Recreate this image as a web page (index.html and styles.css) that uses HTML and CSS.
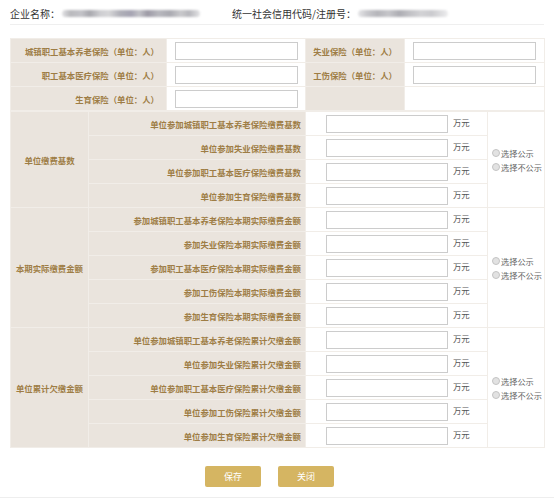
FILE: index.html
```html
<!DOCTYPE html>
<html lang="zh">
<head>
<meta charset="utf-8">
<link rel="stylesheet" href="styles.css">
</head>
<body>
<div class="page">
  <div class="header">
    <div class="hitem first">企业名称：<span class="blur b1"></span></div>
    <div class="hitem">统一社会信用代码/注册号：<span class="blur b2"></span></div>
  </div>

  <table class="grid top">
    <colgroup><col class="c1"><col class="c2"><col class="c3"><col class="c4"></colgroup>
    <tr>
      <td class="lbl">城镇职工基本养老保险（单位：人）</td>
      <td class="val"><input class="inp"></td>
      <td class="lbl">失业保险（单位：人）</td>
      <td class="val"><input class="inp"></td>
    </tr>
    <tr>
      <td class="lbl">职工基本医疗保险（单位：人）</td>
      <td class="val"><input class="inp"></td>
      <td class="lbl">工伤保险（单位：人）</td>
      <td class="val"><input class="inp"></td>
    </tr>
    <tr>
      <td class="lbl">生育保险（单位：人）</td>
      <td class="val"><input class="inp"></td>
      <td class="lbl"></td>
      <td class="val"></td>
    </tr>
  </table>

  <table class="grid main">
    <colgroup><col class="m1"><col class="m2"><col class="m3"><col class="m4"></colgroup>
    <tr>
      <td class="grp" rowspan="4">单位缴费基数</td>
      <td class="lbl item">单位参加城镇职工基本养老保险缴费基数</td>
      <td class="amt"><input class="inp2"><span class="unit">万元</span></td>
      <td class="pub" rowspan="4"><label class="radio"><span class="dot"></span>选择公示</label><label class="radio"><span class="dot"></span>选择不公示</label></td>
    </tr>
    <tr><td class="lbl item">单位参加失业保险缴费基数</td><td class="amt"><input class="inp2"><span class="unit">万元</span></td></tr>
    <tr><td class="lbl item">单位参加职工基本医疗保险缴费基数</td><td class="amt"><input class="inp2"><span class="unit">万元</span></td></tr>
    <tr><td class="lbl item">单位参加生育保险缴费基数</td><td class="amt"><input class="inp2"><span class="unit">万元</span></td></tr>

    <tr>
      <td class="grp" rowspan="5">本期实际缴费金额</td>
      <td class="lbl item">参加城镇职工基本养老保险本期实际缴费金额</td>
      <td class="amt"><input class="inp2"><span class="unit">万元</span></td>
      <td class="pub" rowspan="5"><label class="radio"><span class="dot"></span>选择公示</label><label class="radio"><span class="dot"></span>选择不公示</label></td>
    </tr>
    <tr><td class="lbl item">参加失业保险本期实际缴费金额</td><td class="amt"><input class="inp2"><span class="unit">万元</span></td></tr>
    <tr><td class="lbl item">参加职工基本医疗保险本期实际缴费金额</td><td class="amt"><input class="inp2"><span class="unit">万元</span></td></tr>
    <tr><td class="lbl item">参加工伤保险本期实际缴费金额</td><td class="amt"><input class="inp2"><span class="unit">万元</span></td></tr>
    <tr><td class="lbl item">参加生育保险本期实际缴费金额</td><td class="amt"><input class="inp2"><span class="unit">万元</span></td></tr>

    <tr>
      <td class="grp" rowspan="5">单位累计欠缴金额</td>
      <td class="lbl item">单位参加城镇职工基本养老保险累计欠缴金额</td>
      <td class="amt"><input class="inp2"><span class="unit">万元</span></td>
      <td class="pub" rowspan="5"><label class="radio"><span class="dot"></span>选择公示</label><label class="radio"><span class="dot"></span>选择不公示</label></td>
    </tr>
    <tr><td class="lbl item">单位参加失业保险累计欠缴金额</td><td class="amt"><input class="inp2"><span class="unit">万元</span></td></tr>
    <tr><td class="lbl item">单位参加职工基本医疗保险累计欠缴金额</td><td class="amt"><input class="inp2"><span class="unit">万元</span></td></tr>
    <tr><td class="lbl item">单位参加工伤保险累计欠缴金额</td><td class="amt"><input class="inp2"><span class="unit">万元</span></td></tr>
    <tr><td class="lbl item">单位参加生育保险累计欠缴金额</td><td class="amt"><input class="inp2"><span class="unit">万元</span></td></tr>
  </table>

  <div class="actions">
    <button class="btn">保存</button>
    <button class="btn">关闭</button>
  </div>
</div>
</body>
</html>
```

FILE: styles.css
```css
html, body {
  margin: 0;
  padding: 0;
  background: #ffffff;
}
body {
  font-family: "Noto Sans CJK SC", "Liberation Sans", sans-serif;
  width: 554px;
  height: 498px;
  overflow: hidden;
}
.page {
  padding: 0 10px;
  height: 498px;
  box-sizing: border-box;
  border-bottom: 1px solid #eeeeee;
}
.header {
  height: 25px;
  border-bottom: 1px solid #efefef;
  display: flex;
  align-items: center;
  font-size: 10px;
  color: #333333;
  padding-top: 2px;
  box-sizing: border-box;
}
.hitem {
  display: flex;
  align-items: center;
  white-space: nowrap;
}
.hitem.first {
  width: 222px;
}
.blur {
  display: inline-block;
  height: 7px;
  border-radius: 4px;
  filter: blur(0.8px);
}
.b1 {
  width: 138px;
  margin-left: 2px;
  background: linear-gradient(90deg, #e2e2e4 0, #b9b9bd 6%, #c3c3c8 14%, #a8a8ae 20%, #cfcfd2 28%, #d6d6d8 34%, #b0b0b8 42%, #a5a3b2 50%, #c2c2c7 56%, #9d9aa6 62%, #b8b8be 70%, #a9a9b0 78%, #c9c9cc 86%, #b7b7bc 92%, #e3e3e5 100%);
}
.b2 {
  width: 90px;
  margin-left: 2px;
  background: linear-gradient(90deg, #e6e6e8 0, #c8c8cc 10%, #b5b5ba 22%, #c6c6ca 34%, #adadb3 46%, #c2c2c6 58%, #d2d2d5 70%, #cacace 82%, #ededee 100%);
}

.grid {
  border-collapse: collapse;
  table-layout: fixed;
  width: 534px;
  font-size: 8.4px;
}
.grid td {
  border: 1px solid #f1ede8;
  padding: 0;
  height: 24px;
  box-sizing: border-box;
  vertical-align: middle;
}
.grid tr {
  height: 24px;
}
.top {
  margin-top: 13px;
}
.c1 { width: 156px; }
.c2 { width: 139px; }
.c3 { width: 99px; }
.c4 { width: 140px; }
.m1 { width: 78px; }
.m2 { width: 217px; }
.m3 { width: 182px; }
.m4 { width: 57px; }

.lbl {
  background: #eae4dd;
  color: #9e7d45;
  font-weight: 600;
  text-align: right;
  padding-right: 7px !important;
  white-space: nowrap;
  overflow: hidden;
}
.lbl.item {
  padding-right: 4px !important;
}
.grp {
  background: #eae4dd;
  color: #9e7d45;
  font-weight: 600;
  text-align: center;
}
.val {
  background: #ffffff;
  padding-left: 8px !important;
}
.inp {
  display: block;
  width: 123px;
  height: 18px;
  box-sizing: border-box;
  border: 1px solid #cccccc;
  margin: 0;
  padding: 0;
  outline: none;
}
.amt {
  padding-left: 20px !important;
  white-space: nowrap;
}
.inp2 {
  display: inline-block;
  vertical-align: middle;
  width: 122px;
  height: 18px;
  box-sizing: border-box;
  border: 1px solid #cccccc;
  margin: 0;
  padding: 0;
  outline: none;
}
.unit {
  display: inline-block;
  vertical-align: middle;
  margin-left: 5px;
  color: #555555;
  margin-top: -3px;
}
.pub {
  padding-left: 4px !important;
  white-space: nowrap;
  font-size: 8.2px;
}
.radio {
  display: flex;
  align-items: center;
  color: #666666;
  height: 14px;
}
.dot {
  width: 6px;
  height: 6px;
  border-radius: 50%;
  border: 1px solid #c4c4c4;
  background: #e2e2e2;
  margin-right: 1px;
  flex: none;
}

.actions {
  display: flex;
  justify-content: center;
  gap: 17px;
  margin-top: 18px;
  padding-right: 15px;
}
.btn {
  width: 56px;
  height: 21px;
  border: none;
  border-radius: 2px;
  background: #d5b562;
  color: #ffffff;
  font-family: "Noto Sans CJK SC", "Liberation Sans", sans-serif;
  font-size: 9px;
  padding: 0;
}
```
